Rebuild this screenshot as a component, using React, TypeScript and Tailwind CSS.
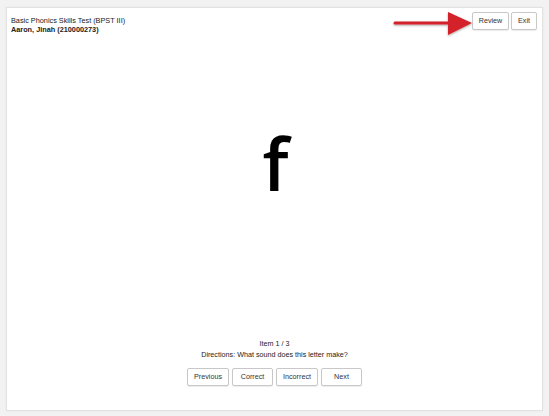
import React from 'react'

const btn =
  'h-[18px] bg-white border border-[#c8c8c8] rounded-[2px] shadow-[0_1px_1px_rgba(0,0,0,0.08)] text-[7.2px] text-[#333] leading-none'

export default function App() {
  return (
    <div
      className="w-[549px] h-[416px] bg-[#f2f2f2] pt-[7px] pl-[6px] pr-[6px] pb-[5px] overflow-hidden"
      style={{ fontFamily: '"Liberation Sans", Arial, sans-serif' }}
    >
      <div className="relative h-full bg-white border border-[#e2e2e2] shadow-[0_0_2px_rgba(0,0,0,0.06)] flex flex-col">
        {/* header */}
        <div className="flex justify-between items-start pl-[4px] pr-[5px] pt-[4px]">
          <div className="pt-[4px] text-[7.3px] leading-[9px] text-[#222]">
            <div>Basic Phonics Skills Test (BPST III)</div>
            <div className="font-bold">Aaron, Jinah (210000273)</div>
          </div>
          <div className="flex gap-[2px]">
            <button className={`${btn} w-[37px]`}>Review</button>
            <button className={`${btn} w-[26px]`}>Exit</button>
          </div>
        </div>

        {/* callout arrow */}
        <svg
          className="absolute left-[385px] top-[2px]"
          width="82"
          height="28"
          viewBox="0 0 82 28"
        >
          <defs>
            <filter id="sh" x="-20%" y="-40%" width="140%" height="180%">
              <feDropShadow dx="0" dy="1" stdDeviation="1" floodColor="#000" floodOpacity="0.35" />
            </filter>
          </defs>
          <g filter="url(#sh)">
            <line x1="3" y1="13" x2="60" y2="13" stroke="#d4202a" strokeWidth="3" strokeLinecap="round" />
            <polygon points="56,2 80,13 56,25" fill="#d4202a" />
          </g>
        </svg>

        {/* letter */}
        <div className="flex-1 flex items-start justify-center pt-[93px]">
          <span
            className="text-[72px] font-semibold leading-none text-black ml-[2px]"
            style={{ fontFamily: '"Open Sans", "DejaVu Sans", sans-serif' }}
          >
            f
          </span>
        </div>

        {/* footer */}
        <div className="flex flex-col items-center pb-[24px] text-[7.2px] text-[#222]">
          <div className="leading-[11px]">Item 1 / 3</div>
          <div className="leading-[11px]">Directions: What sound does this letter make?</div>
          <div className="flex gap-[3px] mt-[8px]">
            <button className={`${btn} w-[42px]`}>Previous</button>
            <button className={`${btn} w-[41px]`}>Correct</button>
            <button className={`${btn} w-[42px]`}>Incorrect</button>
            <button className={`${btn} w-[41px]`}>Next</button>
          </div>
        </div>
      </div>
    </div>
  )
}
